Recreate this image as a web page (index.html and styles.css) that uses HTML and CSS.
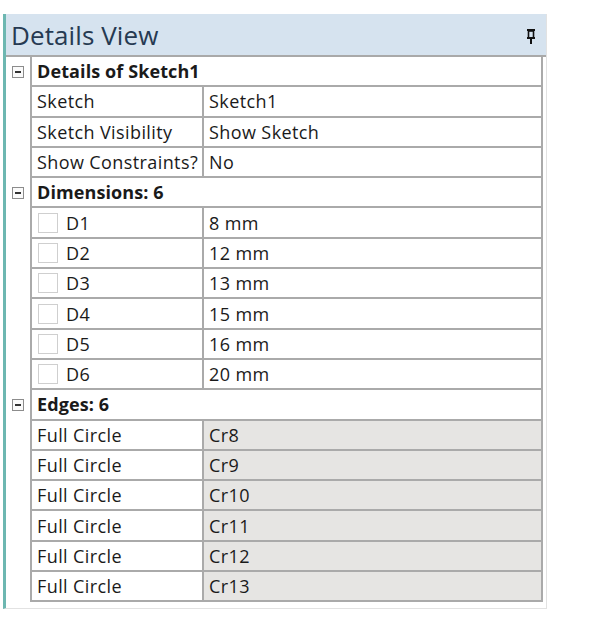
FILE: index.html
```html
<!DOCTYPE html>
<html>
<head>
<meta charset="utf-8">
<link rel="stylesheet" href="styles.css">
</head>
<body>
<div class="panel">
  <div class="header">
    <span class="title">Details View</span>
    <svg class="pin" width="10" height="16" viewBox="0 0 10 16">
      <rect x="1" y="1" width="8" height="2" fill="#111"/>
      <rect x="2.5" y="3" width="5" height="7" fill="none" stroke="#111" stroke-width="1.6"/>
      <rect x="1" y="9" width="8" height="2" fill="#111"/>
      <rect x="4" y="11" width="2" height="5" fill="#111"/>
    </svg>
  </div>
  <div class="table">
    <div class="row group first"><div class="gut"><span class="minus"></span></div><div class="cell span">Details of Sketch1</div></div>
    <div class="row"><div class="gut"></div><div class="cell lab">Sketch</div><div class="cell val">Sketch1</div></div>
    <div class="row"><div class="gut"></div><div class="cell lab">Sketch Visibility</div><div class="cell val">Show Sketch</div></div>
    <div class="row"><div class="gut"></div><div class="cell lab">Show Constraints?</div><div class="cell val">No</div></div>
    <div class="row group"><div class="gut"><span class="minus"></span></div><div class="cell span">Dimensions: 6</div></div>
    <div class="row"><div class="gut"></div><div class="cell lab chk"><span class="box"></span>D1</div><div class="cell val">8 mm</div></div>
    <div class="row"><div class="gut"></div><div class="cell lab chk"><span class="box"></span>D2</div><div class="cell val">12 mm</div></div>
    <div class="row"><div class="gut"></div><div class="cell lab chk"><span class="box"></span>D3</div><div class="cell val">13 mm</div></div>
    <div class="row"><div class="gut"></div><div class="cell lab chk"><span class="box"></span>D4</div><div class="cell val">15 mm</div></div>
    <div class="row"><div class="gut"></div><div class="cell lab chk"><span class="box"></span>D5</div><div class="cell val">16 mm</div></div>
    <div class="row"><div class="gut"></div><div class="cell lab chk"><span class="box"></span>D6</div><div class="cell val">20 mm</div></div>
    <div class="row group"><div class="gut"><span class="minus"></span></div><div class="cell span">Edges: 6</div></div>
    <div class="row"><div class="gut"></div><div class="cell lab">Full Circle</div><div class="cell val ro">Cr8</div></div>
    <div class="row"><div class="gut"></div><div class="cell lab">Full Circle</div><div class="cell val ro">Cr9</div></div>
    <div class="row"><div class="gut"></div><div class="cell lab">Full Circle</div><div class="cell val ro">Cr10</div></div>
    <div class="row"><div class="gut"></div><div class="cell lab">Full Circle</div><div class="cell val ro">Cr11</div></div>
    <div class="row"><div class="gut"></div><div class="cell lab">Full Circle</div><div class="cell val ro">Cr12</div></div>
    <div class="row"><div class="gut"></div><div class="cell lab">Full Circle</div><div class="cell val ro">Cr13</div></div>
  </div>
</div>
</body>
</html>
```
FILE: styles.css
```css
html, body {
  margin: 0;
  padding: 0;
  background: #ffffff;
}
body {
  font-family: "Open Sans", "Noto Sans", sans-serif;
  color: #1a1a1a;
}
.panel {
  margin: 14px 0 0 3px;
  width: 540px;
  border-left: 3px solid #6db7b1;
  border-right: 1px solid #e2e2e2;
  border-bottom: 1px solid #e2e2e2;
  padding-bottom: 6px;
}
.header {
  height: 43px;
  background: #d6e3ef;
  border-bottom: 2px solid #a9a9a9;
  display: flex;
  align-items: center;
  justify-content: space-between;
  padding: 0 10px 0 5px;
  box-sizing: border-box;
}
.title {
  font-size: 26px;
  color: #263a52;
  letter-spacing: 0.1px;
}
.pin {
  display: block;
  margin-top: 2px;
}
.table {
  display: flex;
  flex-direction: column;
}
.row {
  display: grid;
  grid-template-columns: 24px 174px 339px;
  height: 30.3px;
  font-size: 18px;
  letter-spacing: 0.4px;
}
.row.first .cell {
  border-top: 0;
}
.gut {
  display: flex;
  align-items: center;
  padding-left: 6px;
}
.minus {
  width: 10px;
  height: 10px;
  border: 1px solid #8c8c8c;
  background: #fafafa;
  position: relative;
}
.minus::after {
  content: "";
  position: absolute;
  left: 2px;
  top: 4px;
  width: 6px;
  height: 2px;
  background: #333;
}
.cell {
  display: flex;
  align-items: center;
  border-bottom: 2px solid #aaaaaa;
  box-sizing: border-box;
  white-space: nowrap;
  overflow: hidden;
}
.lab {
  border-left: 2px solid #aaaaaa;
  border-right: 2px solid #aaaaaa;
  padding-left: 5px;
}
.val {
  border-right: 2px solid #aaaaaa;
  padding-left: 5px;
}
.val.ro {
  background: #e6e5e3;
}
.span {
  grid-column: 2 / 4;
  border-left: 2px solid #aaaaaa;
  border-right: 2px solid #aaaaaa;
  padding-left: 5px;
  font-weight: 700;
  letter-spacing: 0.1px;
}
.chk {
  padding-left: 6px;
}
.box {
  width: 18px;
  height: 18px;
  border: 1px solid #cfcfcf;
  background: #fff;
  margin-right: 8px;
  flex: none;
}
```
